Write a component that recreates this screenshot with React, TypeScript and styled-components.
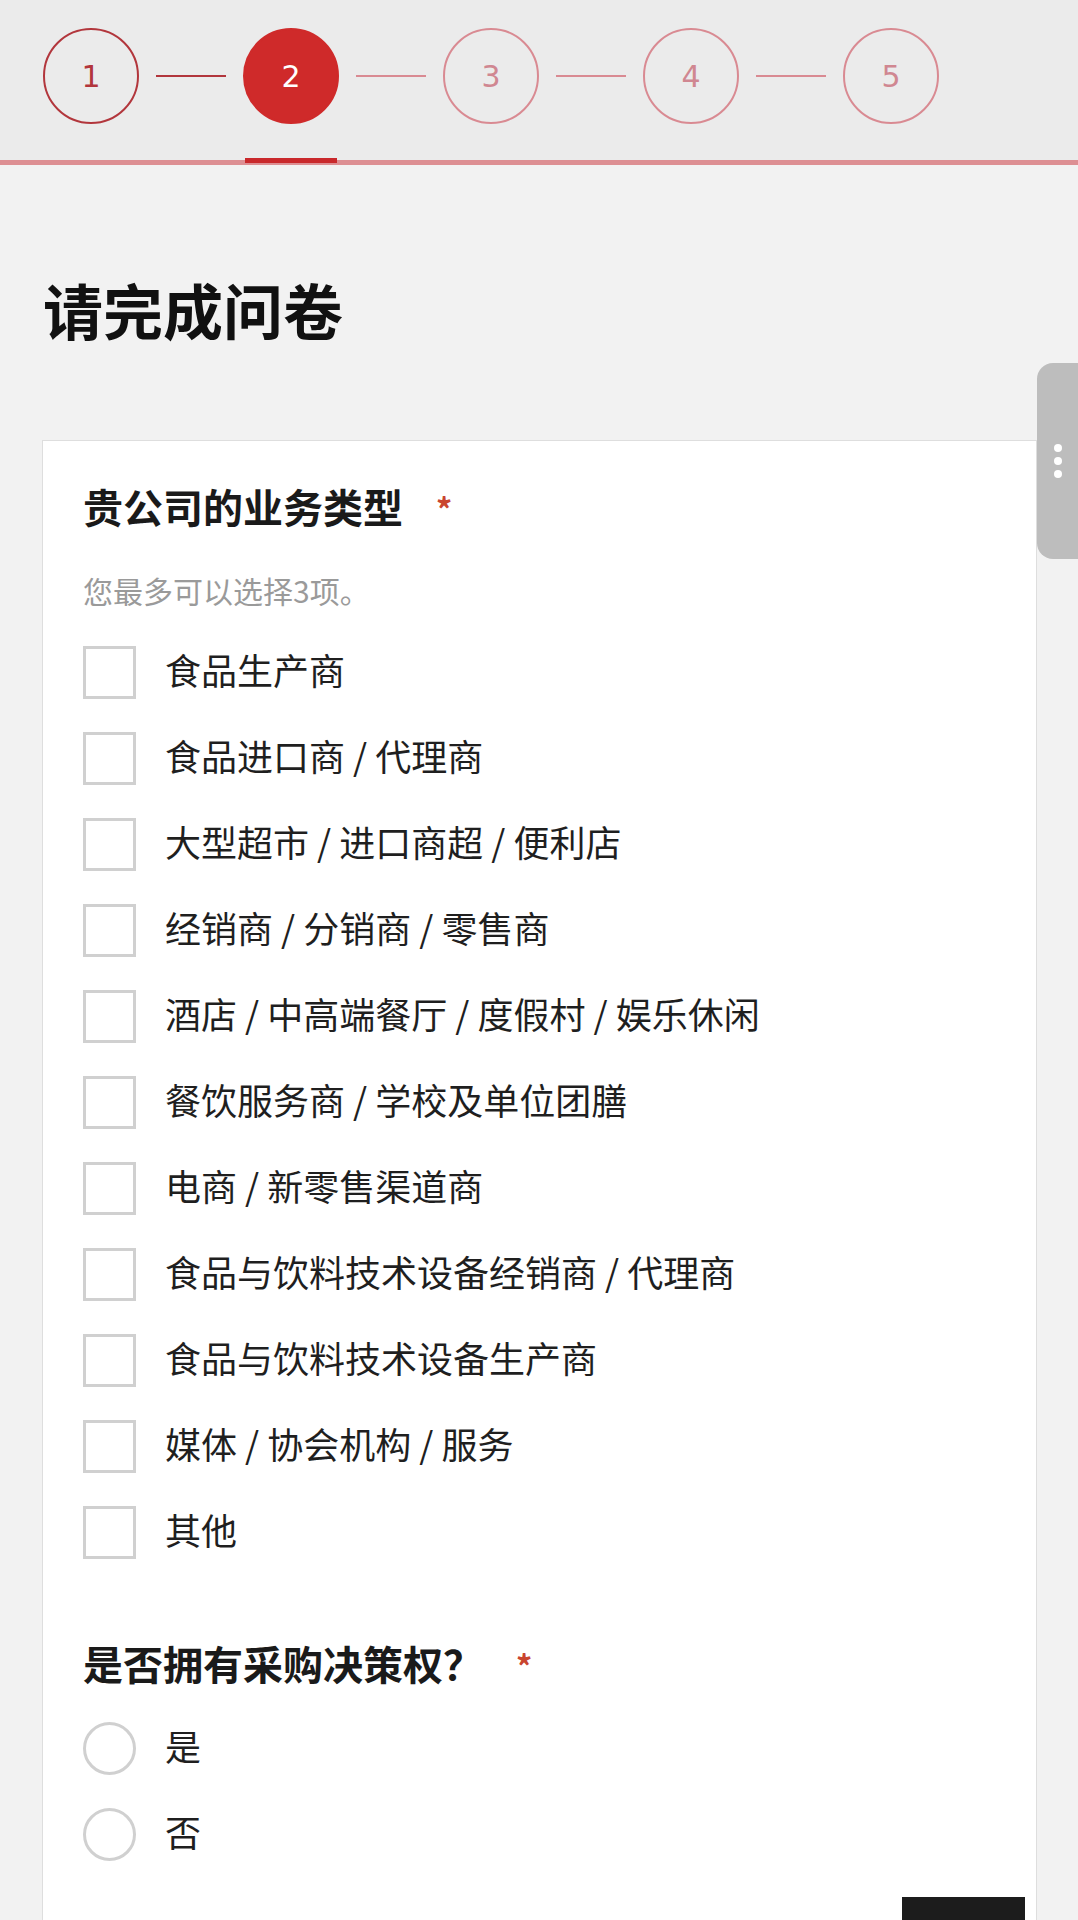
import React from "react";
import styled, { createGlobalStyle } from "styled-components";

type StepState = "done" | "active" | "todo";

const steps: { n: number; state: StepState }[] = [
  { n: 1, state: "done" },
  { n: 2, state: "active" },
  { n: 3, state: "todo" },
  { n: 4, state: "todo" },
  { n: 5, state: "todo" },
];

const businessTypes = [
  "食品生产商",
  "食品进口商 / 代理商",
  "大型超市 / 进口商超 / 便利店",
  "经销商 / 分销商 / 零售商",
  "酒店 / 中高端餐厅 / 度假村 / 娱乐休闲",
  "餐饮服务商 / 学校及单位团膳",
  "电商 / 新零售渠道商",
  "食品与饮料技术设备经销商 / 代理商",
  "食品与饮料技术设备生产商",
  "媒体 / 协会机构 / 服务",
  "其他",
];

const App = () => {
  return (
    <>
      <GlobalStyle />
      <Page>
        <StepBar>
          {steps.map((s, i) => (
            <React.Fragment key={s.n}>
              {i > 0 && <Connector $state={s.state === "active" ? "done" : s.state} />}
              <StepCircle $state={s.state}>{s.n}</StepCircle>
            </React.Fragment>
          ))}
        </StepBar>

        <Title>请完成问卷</Title>

        <Card>
          <Question>
            贵公司的业务类型<Required>*</Required>
          </Question>
          <Hint>您最多可以选择3项。</Hint>
          <OptionList $top={36}>
            {businessTypes.map((t) => (
              <Option key={t}>
                <Checkbox />
                <OptionLabel>{t}</OptionLabel>
              </Option>
            ))}
          </OptionList>

          <Question $top={78}>
            是否拥有采购决策权？<Required>*</Required>
          </Question>
          <OptionList $top={33}>
            <Option>
              <Radio />
              <OptionLabel>是</OptionLabel>
            </Option>
            <Option>
              <Radio />
              <OptionLabel>否</OptionLabel>
            </Option>
          </OptionList>

          <ButtonRow>
            <NextButton aria-label="下一步" />
          </ButtonRow>
        </Card>

        <SideTab>
          <Dot />
          <Dot />
          <Dot />
        </SideTab>
      </Page>
    </>
  );
};

export default App;

const GlobalStyle = createGlobalStyle`
  html, body {
    margin: 0;
    padding: 0;
    background: #f2f2f2;
  }
  body {
    font-family: "Noto Sans CJK SC", "Noto Sans", sans-serif;
    color: #222;
  }
`;

const Page = styled.div`
  width: 1078px;
  min-height: 1920px;
  overflow: hidden;
  background: #f2f2f2;
`;

const StepBar = styled.div`
  display: flex;
  align-items: center;
  height: 96px;
  padding: 28px 0 36px 43px;
  background: #ebebeb;
  border-bottom: 5px solid #dd8f93;
`;

const circleColors: Record<StepState, { border: string; bg: string; text: string }> = {
  done: { border: "#b2363c", bg: "transparent", text: "#b2363c" },
  active: { border: "#cf2a2a", bg: "#cf2a2a", text: "#ffffff" },
  todo: { border: "#d98a92", bg: "transparent", text: "#d08791" },
};

const StepCircle = styled.div<{ $state: StepState }>`
  position: relative;
  box-sizing: border-box;
  width: 96px;
  height: 96px;
  flex: none;
  border-radius: 50%;
  border: 2px solid ${(p) => circleColors[p.$state].border};
  background: ${(p) => circleColors[p.$state].bg};
  color: ${(p) => circleColors[p.$state].text};
  display: flex;
  align-items: center;
  justify-content: center;
  font-family: "DejaVu Sans", sans-serif;
  font-size: 30px;
  font-weight: 400;

  ${(p) =>
    p.$state === "active" &&
    `
    &::after {
      content: "";
      position: absolute;
      left: 0;
      right: 0;
      bottom: -41px;
      height: 5px;
      background: #c9282b;
    }
  `}
`;

const Connector = styled.div<{ $state: StepState }>`
  width: 70px;
  height: 2px;
  margin: 0 17px;
  background: ${(p) => (p.$state === "done" ? "#b2363c" : "#d98a92")};
`;

const Title = styled.h1`
  margin: 107px 0 0 43px;
  font-size: 60px;
  line-height: 74px;
  font-weight: 700;
  color: #111;
`;

const Card = styled.div`
  box-sizing: border-box;
  width: 995px;
  margin: 94px 0 0 42px;
  padding: 39px 11px 0 40px;
  background: #fff;
  border: 1px solid #dedede;
  border-bottom: none;
`;

const Question = styled.div<{ $top?: number }>`
  margin-top: ${(p) => p.$top ?? 0}px;
  font-size: 40px;
  line-height: 52px;
  font-weight: 700;
  color: #1a1a1a;
  display: flex;
  align-items: flex-start;
`;

const Required = styled.span`
  margin-left: 33px;
  padding-top: 8px;
  font-size: 32px;
  line-height: 40px;
  font-weight: 700;
  color: #c9452f;
`;

const Hint = styled.div`
  margin-top: 38px;
  font-size: 30px;
  line-height: 40px;
  color: #9a9a9a;
`;

const OptionList = styled.div<{ $top?: number }>`
  margin-top: ${(p) => p.$top ?? 34}px;
  display: flex;
  flex-direction: column;
  gap: 33px;
`;

const Option = styled.label`
  display: flex;
  align-items: center;
  gap: 29px;
  height: 53px;
`;

const Checkbox = styled.span`
  box-sizing: border-box;
  width: 53px;
  height: 53px;
  flex: none;
  border: 3px solid #d0d0d0;
  background: #fff;
`;

const Radio = styled(Checkbox)`
  border-radius: 50%;
`;

const OptionLabel = styled.span`
  font-size: 36px;
  line-height: 48px;
  padding-bottom: 8px;
  color: #1f1f1f;
`;

const ButtonRow = styled.div`
  display: flex;
  justify-content: flex-end;
  margin-top: 36px;
`;

const NextButton = styled.button`
  width: 123px;
  height: 80px;
  border: none;
  border-radius: 0;
  background: #1c1c1c;
`;

const SideTab = styled.div`
  position: absolute;
  top: 363px;
  right: 0;
  width: 41px;
  height: 196px;
  background: #bdbdbd;
  border-radius: 16px 0 0 16px;
  display: flex;
  flex-direction: column;
  align-items: center;
  justify-content: center;
  gap: 5px;
`;

const Dot = styled.span`
  width: 8px;
  height: 8px;
  border-radius: 50%;
  background: #fff;
`;
